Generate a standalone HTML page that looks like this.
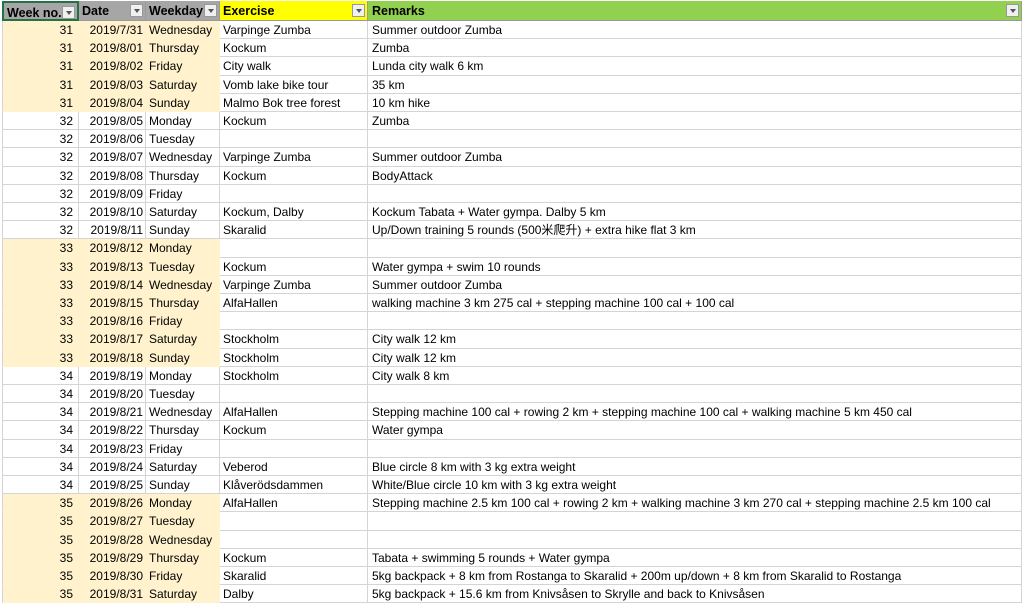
<!DOCTYPE html>
<html><head><meta charset="utf-8"><style>
body{margin:0;width:1024px;height:603px;overflow:hidden;background:#fff;font-family:"Liberation Sans","Noto Sans CJK SC",sans-serif;font-size:12px;color:#000;position:relative}
.r{position:absolute;left:0;width:1024px;height:18.2px}
.c{position:absolute;top:0;height:18.2px;line-height:18px;box-sizing:border-box;white-space:nowrap;overflow:visible;border-right:1px solid #d4d4d4;border-bottom:1px solid #d4d4d4}
.a{left:2px;width:77px;text-align:right;padding-right:5px;border-left:1px solid #d4d4d4}
.b{left:79px;width:67px;text-align:right;padding-right:2px}
.w{left:146px;width:74px;padding-left:3px}
.d{left:220px;width:148px;padding-left:3px}
.e{left:368px;width:654px;padding-left:4px;overflow:visible}
.y .a,.y .b,.y .w{background:#fff2cc;border-color:#fff2cc}
.y .a{border-left:1px solid #d4d4d4}
.h .c{height:20px;line-height:20px;font-weight:bold;font-size:12.5px;border-color:#9a9a9a}
.h .a,.h .b,.h .w{background:#a6a6a6;text-align:left;padding-left:3px}
.h .d{background:#ffff00}
.h .e{background:#92d050}
.f{position:absolute;right:2px;top:3px;width:13px;height:13px;background:#f0f0f0;border:1px solid #999;box-sizing:border-box}
.f:after{content:"";position:absolute;left:3px;top:4px;border-left:3px solid transparent;border-right:3px solid transparent;border-top:4px solid #555}
</style></head><body>
<div class="r h" style="top:1px"><div class="c a" style="border:2px solid #217346">Week no.<span class="f"></span></div><div class="c b">Date<span class="f"></span></div><div class="c w">Weekday<span class="f"></span></div><div class="c d">Exercise<span class="f"></span></div><div class="c e">Remarks<span class="f"></span></div></div>
<div id="rows"></div>
<script>
var d=[
[31,"2019/7/31","Wednesday","Varpinge Zumba","Summer outdoor Zumba"],
[31,"2019/8/01","Thursday","Kockum","Zumba"],
[31,"2019/8/02","Friday","City walk","Lunda city walk 6 km"],
[31,"2019/8/03","Saturday","Vomb lake bike tour","35 km"],
[31,"2019/8/04","Sunday","Malmo Bok tree forest","10 km hike"],
[32,"2019/8/05","Monday","Kockum","Zumba"],
[32,"2019/8/06","Tuesday","",""],
[32,"2019/8/07","Wednesday","Varpinge Zumba","Summer outdoor Zumba"],
[32,"2019/8/08","Thursday","Kockum","BodyAttack"],
[32,"2019/8/09","Friday","",""],
[32,"2019/8/10","Saturday","Kockum, Dalby","Kockum Tabata + Water gympa. Dalby 5 km"],
[32,"2019/8/11","Sunday","Skaralid","Up/Down training 5 rounds (500米爬升) + extra hike flat 3 km"],
[33,"2019/8/12","Monday","",""],
[33,"2019/8/13","Tuesday","Kockum","Water gympa + swim 10 rounds"],
[33,"2019/8/14","Wednesday","Varpinge Zumba","Summer outdoor Zumba"],
[33,"2019/8/15","Thursday","AlfaHallen","walking machine 3 km 275 cal + stepping machine 100 cal + 100 cal"],
[33,"2019/8/16","Friday","",""],
[33,"2019/8/17","Saturday","Stockholm","City walk 12 km"],
[33,"2019/8/18","Sunday","Stockholm","City walk 12 km"],
[34,"2019/8/19","Monday","Stockholm","City walk 8 km"],
[34,"2019/8/20","Tuesday","",""],
[34,"2019/8/21","Wednesday","AlfaHallen","Stepping machine 100 cal + rowing 2 km + stepping machine 100 cal + walking machine 5 km 450 cal"],
[34,"2019/8/22","Thursday","Kockum","Water gympa"],
[34,"2019/8/23","Friday","",""],
[34,"2019/8/24","Saturday","Veberod","Blue circle 8 km with 3 kg extra weight"],
[34,"2019/8/25","Sunday","Klåverödsdammen","White/Blue circle 10 km with 3 kg extra weight"],
[35,"2019/8/26","Monday","AlfaHallen","Stepping machine 2.5 km 100 cal + rowing 2 km + walking machine 3 km 270 cal + stepping machine 2.5 km 100 cal"],
[35,"2019/8/27","Tuesday","",""],
[35,"2019/8/28","Wednesday","",""],
[35,"2019/8/29","Thursday","Kockum","Tabata + swimming 5 rounds + Water gympa"],
[35,"2019/8/30","Friday","Skaralid","5kg backpack + 8 km from Rostanga to Skaralid + 200m up/down + 8 km from Skaralid to Rostanga"],
[35,"2019/8/31","Saturday","Dalby","5kg backpack + 15.6 km from Knivsåsen to Skrylle and back to Knivsåsen"]];
var h="";d.forEach(function(r,i){h+='<div class="r'+(r[0]%2?' y':'')+'" style="top:'+(21+i*18.2)+'px"><div class="c a">'+r[0]+'</div><div class="c b">'+r[1]+'</div><div class="c w">'+r[2]+'</div><div class="c d">'+r[3]+'</div><div class="c e">'+r[4]+'</div></div>';});
document.getElementById("rows").innerHTML=h;
</script>
</body></html>
